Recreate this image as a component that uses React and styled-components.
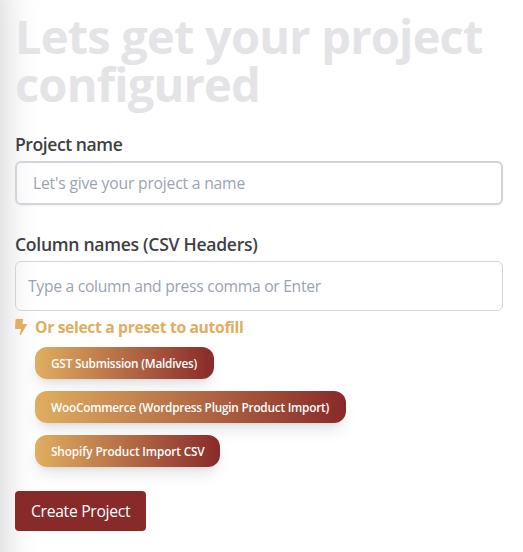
import React from "react";
import styled, { createGlobalStyle } from "styled-components";

const GlobalStyle = createGlobalStyle`
  *, *::before, *::after { box-sizing: border-box; }
  body {
    margin: 0;
    background: #fff;
    overflow: hidden;
    font-family: "Segoe UI", "Open Sans", "Noto Sans", sans-serif;
  }
`;

const Page = styled.div`
  position: relative;
  min-height: 552px;
  padding: 12px 20px 0 15px;
  overflow: hidden;
`;

const SidebarEdge = styled.div`
  position: absolute;
  top: -55px;
  left: -240px;
  width: 240px;
  height: 900px;
  pointer-events: none;
  box-shadow: 0 25px 42px -7px rgba(0, 0, 0, 0.28);
`;

const Form = styled.form`
  position: relative;
  display: flex;
  flex-direction: column;
  align-items: stretch;
`;

const Title = styled.h1`
  margin: 0 -20px 0 0;
  font-size: 47px;
  line-height: 48px;
  font-weight: 700;
  letter-spacing: -0.8px;
  color: #e4e4e7;
`;

const Label = styled.label`
  margin-top: ${(p) => p.$gap}px;
  height: 28px;
  font-size: 17.6px;
  line-height: 28px;
  font-weight: 600;
  letter-spacing: ${(p) => p.$track}px;
  color: #3f3f46;
  white-space: nowrap;
`;

const Input = styled.input`
  width: 100%;
  height: ${(p) => (p.$heavy ? 44 : 50)}px;
  margin-top: 3px;
  padding: 0 ${(p) => (p.$heavy ? 16 : 12)}px;
  border: ${(p) => (p.$heavy ? 2 : 1)}px solid #d1d5db;
  border-radius: 6px;
  background: transparent;
  box-shadow: ${(p) => (p.$heavy ? "0 1px 2px rgba(0, 0, 0, 0.05)" : "none")};
  font: 400 15.7px/24px "Segoe UI", "Open Sans", "Noto Sans", sans-serif;
  letter-spacing: ${(p) => p.$track}px;
  outline: none;
  &::placeholder { color: #9ca3af; opacity: 1; }
`;

const PresetHeading = styled.div`
  display: flex;
  align-items: center;
  gap: 8px;
  height: 24px;
  margin-top: 4px;
  font-size: 15.7px;
  line-height: 24px;
  font-weight: 700;
  letter-spacing: -0.35px;
  color: #e0ae60;
  white-space: nowrap;
`;

const BoltIcon = styled.svg`
  display: block;
  width: 12px;
  height: 16px;
  fill: currentColor;
`;

const PresetList = styled.div`
  display: flex;
  flex-direction: column;
  align-items: flex-start;
  gap: 12px;
  margin: 8px 0 0 20px;
`;

const Preset = styled.button`
  width: ${(p) => p.$width}px;
  height: 32px;
  padding: 0 0 0 16px;
  border: 0;
  border-radius: 12px;
  background: linear-gradient(to right, #e0ae60, #882a2a);
  box-shadow: 0 10px 15px -3px rgba(0, 0, 0, 0.1), 0 4px 6px -4px rgba(0, 0, 0, 0.1);
  font: 600 11.8px/16px "Segoe UI", "Open Sans", "Noto Sans", sans-serif;
  letter-spacing: ${(p) => p.$track}px;
  text-align: left;
  white-space: nowrap;
  color: #fff;
`;

const Submit = styled.button`
  align-self: flex-start;
  width: 131px;
  height: 40px;
  margin-top: 24px;
  padding: 0 0 0 16px;
  border: 0;
  border-radius: 4px;
  background: #882a2a;
  font: 400 15.7px/24px "Segoe UI", "Open Sans", "Noto Sans", sans-serif;
  letter-spacing: -0.3px;
  text-align: left;
  white-space: nowrap;
  color: #fff;
`;

const presets = [
  { name: "GST Submission (Maldives)", width: 179, track: -0.2 },
  { name: "WooCommerce (Wordpress Plugin Product Import)", width: 311, track: -0.22 },
  { name: "Shopify Product Import CSV", width: 185, track: -0.13 },
];

export default function App() {
  return (
    <Page>
      <GlobalStyle />
      <SidebarEdge />
      <Form>
        <Title>Lets get your project configured</Title>
        <Label htmlFor="name" $gap={22} $track={-0.45}>Project name</Label>
        <Input id="name" $heavy $track={-0.2} placeholder="Let's give your project a name" />
        <Label htmlFor="columns" $gap={25} $track={-0.3}>Column names (CSV Headers)</Label>
        <Input id="columns" $track={-0.3} placeholder="Type a column and press comma or Enter" />
        <PresetHeading>
          <BoltIcon viewBox="0 0 12 16">
            <path d="M1.2 0H7.6Q8.4 0 8.2 .8L7.2 5H11.4Q12.3 5 11.9 5.8L6.1 15.6Q5.8 16.1 5.2 16Q4.6 15.8 4.8 15.1L6 10H.7Q0 10 0 9.3L.5 .7Q.6 0 1.2 0Z" />
          </BoltIcon>
          Or select a preset to autofill
        </PresetHeading>
        <PresetList>
          {presets.map((p) => (
            <Preset key={p.name} type="button" $width={p.width} $track={p.track}>{p.name}</Preset>
          ))}
        </PresetList>
        <Submit type="button">Create Project</Submit>
      </Form>
    </Page>
  );
}
